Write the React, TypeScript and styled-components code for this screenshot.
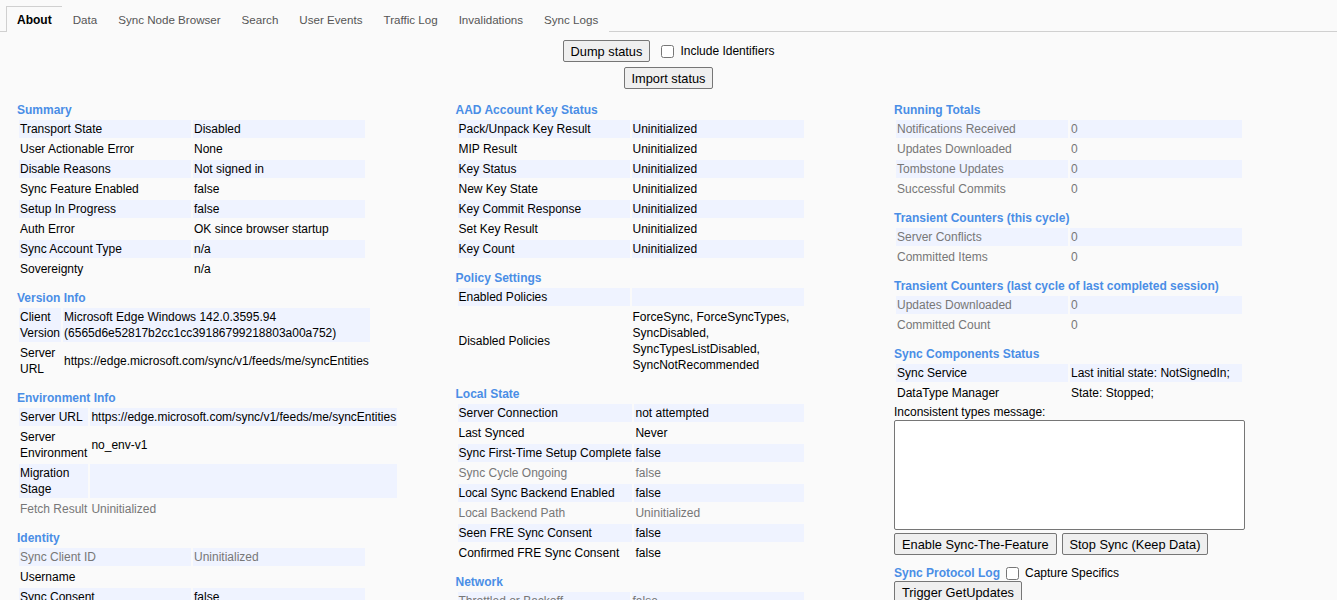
import * as React from 'react';
import styled, { createGlobalStyle } from 'styled-components';

const GlobalStyle = createGlobalStyle`
    body {
        margin: 0;
        background: #fafafa;
        font-family: 'Liberation Sans', Arial, sans-serif;
        font-size: 12px;
        color: #000;
    }
`;

const TabBar = styled.div`
    display: flex;
    padding: 6px 0 0 6px;
    border-bottom: 1px solid #d0d0d0;
    height: 25px;
`;

const Tab = styled.div<{ $active?: boolean }>`
    padding: 5px 10px 3px;
    line-height: 16px;
    font-size: ${p => (p.$active ? '12px' : '11.6px')};
    border: 1px solid ${p => (p.$active ? '#d0d0d0' : 'transparent')};
    border-bottom: none;
    margin-bottom: -1px;
    background: #fafafa;
    color: ${p => (p.$active ? '#000' : '#555')};
    font-weight: ${p => (p.$active ? 'bold' : 'normal')};

    & + & {
        margin-left: -1px;
    }
`;

const ToolRow = styled.div<{ $top: number }>`
    display: flex;
    justify-content: center;
    align-items: center;
    gap: 11px;
    margin-top: ${p => p.$top}px;
`;

const Button = styled.button`
    font-family: 'Liberation Sans', Arial, sans-serif;
    font-size: 12.8px;
    height: 22px;
    padding: 0 7px;
    border: 1px solid #767676;
    border-radius: 2px;
    background: #efefef;
    color: #000;
    white-space: nowrap;
`;

const CheckLabel = styled.label`
    display: inline-flex;
    align-items: center;
    gap: 6px;
    line-height: 16px;
    color: #000;
    font-weight: normal;
`;

const Check = styled.input`
    width: 13px;
    height: 13px;
    margin: 0;
`;

const Columns = styled.div`
    display: grid;
    grid-template-columns: repeat(3, 438.5px);
    padding-left: 17px;
    margin-top: 3px;
`;

const Column = styled.div`
    display: flex;
    flex-direction: column;
    align-items: flex-start;
`;

const Heading = styled.h2`
    margin: 10px 0 0;
    font-size: 12px;
    line-height: 16px;
    font-weight: bold;
    color: rgb(74, 142, 230);
    display: flex;
    align-items: center;
    gap: 6px;
`;

const Table = styled.table<{ $auto?: boolean }>`
    border-spacing: 2px;
    border-collapse: separate;
    width: ${p => (p.$auto ? 'auto' : '350px')};

    tr:nth-child(odd) {
        background: rgb(239, 243, 255);
    }

    td {
        width: ${p => (p.$auto ? 'auto' : '50%')};
    }
`;

const Cell = styled.td<{ $dim?: boolean }>`
    padding: 1px;
    line-height: 16px;
    vertical-align: middle;
    white-space: nowrap;
    color: ${p => (p.$dim ? '#777' : '#000')};
`;

const Note = styled.div`
    line-height: 16px;
`;

const TextBox = styled.textarea`
    display: block;
    box-sizing: border-box;
    width: 351px;
    height: 110px;
    border: 1px solid #767676;
    border-radius: 2px;
    background: #fff;
    resize: none;
    margin: 0 0 3px;
`;

const ButtonRow = styled.div`
    display: flex;
    gap: 5px;
`;

type Row = { label: string[]; value: string[]; dim?: boolean };

interface SectionProps {
    title: string;
    rows: Row[];
    auto?: boolean;
}

const r = (label: string, value: string, dim?: boolean): Row => ({
    label: label.split('|'),
    value: value ? value.split('|') : [],
    dim
});

const Lines = ({ lines }: { lines: string[] }) => (
    <>
        {lines.map((l, i) => (
            <React.Fragment key={i}>
                {i > 0 && <br />}
                {l}
            </React.Fragment>
        ))}
    </>
);

const Section = ({ title, rows, auto }: SectionProps) => (
    <>
        <Heading>{title}</Heading>
        <Table $auto={auto}>
            <tbody>
                {rows.map((row, i) => (
                    <tr key={i}>
                        <Cell $dim={row.dim}>
                            <Lines lines={row.label} />
                        </Cell>
                        <Cell $dim={row.dim}>
                            <Lines lines={row.value} />
                        </Cell>
                    </tr>
                ))}
            </tbody>
        </Table>
    </>
);

const tabs = ['About', 'Data', 'Sync Node Browser', 'Search', 'User Events', 'Traffic Log', 'Invalidations', 'Sync Logs'];

const URL = 'https://edge.microsoft.com/sync/v1/feeds/me/syncEntities';

export default function App() {
    return (
        <>
            <GlobalStyle />
            <TabBar>
                {tabs.map((t, i) => (
                    <Tab key={t} $active={i === 0}>{t}</Tab>
                ))}
            </TabBar>
            <ToolRow $top={8}>
                <Button>Dump status</Button>
                <CheckLabel>
                    <Check type="checkbox" />
                    Include Identifiers
                </CheckLabel>
            </ToolRow>
            <ToolRow $top={5}>
                <Button>Import status</Button>
            </ToolRow>
            <Columns>
                <Column>
                    <Section title="Summary" rows={[
                        r('Transport State', 'Disabled'),
                        r('User Actionable Error', 'None'),
                        r('Disable Reasons', 'Not signed in'),
                        r('Sync Feature Enabled', 'false'),
                        r('Setup In Progress', 'false'),
                        r('Auth Error', 'OK since browser startup'),
                        r('Sync Account Type', 'n/a'),
                        r('Sovereignty', 'n/a')
                    ]} />
                    <Section title="Version Info" auto rows={[
                        r('Client|Version', 'Microsoft Edge Windows 142.0.3595.94|(6565d6e52817b2cc1cc39186799218803a00a752)'),
                        r('Server|URL', URL)
                    ]} />
                    <Section title="Environment Info" auto rows={[
                        r('Server URL', URL),
                        r('Server|Environment', 'no_env-v1'),
                        r('Migration|Stage', ''),
                        r('Fetch Result', 'Uninitialized', true)
                    ]} />
                    <Section title="Identity" rows={[
                        r('Sync Client ID', 'Uninitialized', true),
                        r('Username', ''),
                        r('Sync Consent', 'false')
                    ]} />
                </Column>
                <Column>
                    <Section title="AAD Account Key Status" rows={[
                        r('Pack/Unpack Key Result', 'Uninitialized'),
                        r('MIP Result', 'Uninitialized'),
                        r('Key Status', 'Uninitialized'),
                        r('New Key State', 'Uninitialized'),
                        r('Key Commit Response', 'Uninitialized'),
                        r('Set Key Result', 'Uninitialized'),
                        r('Key Count', 'Uninitialized')
                    ]} />
                    <Section title="Policy Settings" rows={[
                        r('Enabled Policies', ''),
                        r('Disabled Policies', 'ForceSync, ForceSyncTypes,|SyncDisabled,|SyncTypesListDisabled,|SyncNotRecommended')
                    ]} />
                    <Section title="Local State" rows={[
                        r('Server Connection', 'not attempted'),
                        r('Last Synced', 'Never'),
                        r('Sync First-Time Setup Complete', 'false'),
                        r('Sync Cycle Ongoing', 'false', true),
                        r('Local Sync Backend Enabled', 'false'),
                        r('Local Backend Path', 'Uninitialized', true),
                        r('Seen FRE Sync Consent', 'false'),
                        r('Confirmed FRE Sync Consent', 'false')
                    ]} />
                    <Section title="Network" rows={[
                        r('Throttled or Backoff', 'false', true)
                    ]} />
                </Column>
                <Column>
                    <Section title="Running Totals" rows={[
                        r('Notifications Received', '0', true),
                        r('Updates Downloaded', '0', true),
                        r('Tombstone Updates', '0', true),
                        r('Successful Commits', '0', true)
                    ]} />
                    <Section title="Transient Counters (this cycle)" rows={[
                        r('Server Conflicts', '0', true),
                        r('Committed Items', '0', true)
                    ]} />
                    <Section title="Transient Counters (last cycle of last completed session)" rows={[
                        r('Updates Downloaded', '0', true),
                        r('Committed Count', '0', true)
                    ]} />
                    <Section title="Sync Components Status" rows={[
                        r('Sync Service', 'Last initial state: NotSignedIn;'),
                        r('DataType Manager', 'State: Stopped;')
                    ]} />
                    <Note>Inconsistent types message:</Note>
                    <TextBox readOnly />
                    <ButtonRow>
                        <Button>Enable Sync-The-Feature</Button>
                        <Button>Stop Sync (Keep Data)</Button>
                    </ButtonRow>
                    <Heading>
                        Sync Protocol Log
                        <CheckLabel>
                            <Check type="checkbox" />
                            Capture Specifics
                        </CheckLabel>
                    </Heading>
                    <Button>Trigger GetUpdates</Button>
                </Column>
            </Columns>
        </>
    );
}
